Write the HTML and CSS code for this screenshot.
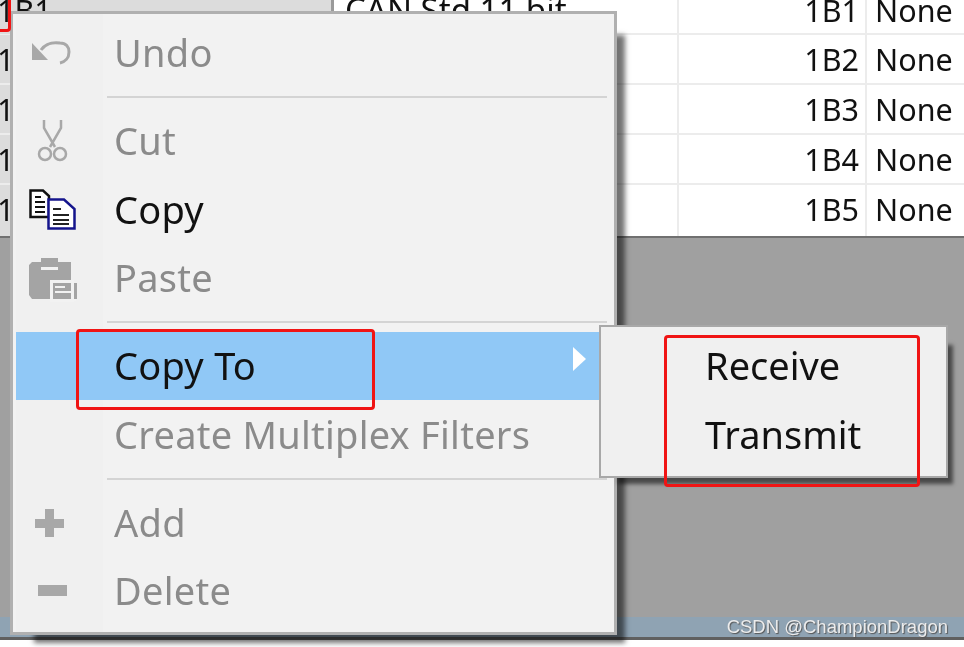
FILE: index.html
```html
<!DOCTYPE html>
<html lang="en">
<head>
  <meta charset="UTF-8">
  <title>Copy To</title>
  <link rel="stylesheet" href="styles.css">
</head>
<body>
  <div class="screen">

    <!-- Message table behind the menu -->
    <div class="table">
      <div class="row first">
        <div class="cell name">1B1</div>
        <div class="cell type">CAN Std 11 bit</div>
        <div class="cell id">1B1</div>
        <div class="cell mux">None</div>
      </div>
      <div class="row">
        <div class="cell name">1B2</div>
        <div class="cell type"></div>
        <div class="cell id">1B2</div>
        <div class="cell mux">None</div>
      </div>
      <div class="row">
        <div class="cell name">1B3</div>
        <div class="cell type"></div>
        <div class="cell id">1B3</div>
        <div class="cell mux">None</div>
      </div>
      <div class="row">
        <div class="cell name">1B4</div>
        <div class="cell type"></div>
        <div class="cell id">1B4</div>
        <div class="cell mux">None</div>
      </div>
      <div class="row last">
        <div class="cell name">1B5</div>
        <div class="cell type"></div>
        <div class="cell id">1B5</div>
        <div class="cell mux">None</div>
      </div>
    </div>
    <div class="workspace"></div>
    <div class="status"></div>
    <div class="bottom-edge"></div>

    <!-- Context menu -->
    <div class="menu">
      <div class="gutter"></div>
      <div class="item disabled">
        <svg class="icon" width="50" height="50" viewBox="0 0 50 50">
          <path d="M5 15V32H21Z" fill="#a8a8a8"/>
          <path d="M14 22C19 15 25 14 33 15C39 15 42 19 42 24C42 30 38 34 33 35" fill="none" stroke="#a8a8a8" stroke-width="3"/>
        </svg>
        <span>Undo</span>
      </div>
      <div class="sep"></div>
      <div class="item disabled">
        <svg class="icon" width="50" height="50" viewBox="0 0 50 50">
          <path d="M17 4V12L28 31M34 4V12L23 31" fill="none" stroke="#a8a8a8" stroke-width="2.5"/>
          <circle cx="18" cy="38" r="6" fill="none" stroke="#a8a8a8" stroke-width="2.5"/>
          <circle cx="33" cy="38" r="6" fill="none" stroke="#a8a8a8" stroke-width="2.5"/>
        </svg>
        <span>Cut</span>
      </div>
      <div class="item">
        <svg class="icon" width="50" height="50" viewBox="0 0 50 50">
          <path d="M3.5 5.5H16L22 11V32H3.5Z" fill="#fff" stroke="#111" stroke-width="2.5"/>
          <path d="M8 12H14M8 17H18M8 22H18M8 27H18" stroke="#111" stroke-width="2"/>
          <path d="M21.5 14.5H37L47.5 24V43.5H21.5Z" fill="#fff" stroke="#14148c" stroke-width="2.5"/>
          <path d="M26 24H34M26 30H42M26 35H42M26 39H42" stroke="#222" stroke-width="2"/>
        </svg>
        <span>Copy</span>
      </div>
      <div class="item disabled">
        <svg class="icon" width="50" height="50" viewBox="0 0 50 50">
          <path d="M5 9H14V5H31V9H44V30H50V46H5L2 42V12Z" fill="#a4a4a4"/>
          <rect x="14" y="14" width="17" height="3" fill="#f2f2f2"/>
          <path d="M23 27H47V49H23Z" fill="#f2f2f2"/>
          <path d="M26 30H44V46H26Z" fill="#a4a4a4"/>
          <path d="M28 34H38M28 39H46M24 47H49" stroke="#f2f2f2" stroke-width="2"/>
        </svg>
        <span>Paste</span>
      </div>
      <div class="sep"></div>
      <div class="item active">
        <span>Copy To</span>
        <div class="arrow"></div>
      </div>
      <div class="item disabled"><span>Create Multiplex Filters</span></div>
      <div class="sep"></div>
      <div class="item disabled">
        <svg class="icon" width="50" height="50" viewBox="0 0 50 50">
          <path d="M18 11H27V21H37V30H27V39H18V30H8V21H18Z" fill="#a8a8a8"/>
        </svg>
        <span>Add</span>
      </div>
      <div class="item disabled">
        <svg class="icon" width="50" height="50" viewBox="0 0 50 50">
          <rect x="11" y="19" width="29" height="11" fill="#a8a8a8"/>
        </svg>
        <span>Delete</span>
      </div>
    </div>

    <!-- Submenu -->
    <div class="submenu">
      <div class="sub-item">Receive</div>
      <div class="sub-item">Transmit</div>
    </div>

    <!-- Red annotation boxes -->
    <div class="mark mark-corner"></div>
    <div class="mark mark-copyto"></div>
    <div class="mark mark-sub"></div>

    <div class="watermark">CSDN @ChampionDragon</div>
  </div>
</body>
</html>
```

FILE: styles.css
```css
/* Global */
html, body {
  margin: 0;
  padding: 0;
  background: #fff;
}

.screen {
  width: 964px;
  height: 647px;
  display: flex;
  flex-direction: column;
  position: relative;
  overflow: hidden;
  font-family: "Noto Sans", sans-serif;
  font-size: 30.5px;
  color: #111;
  filter: blur(0.7px);
}

/* Table */
.row {
  display: flex;
  height: 48px;
  border-bottom: 2px solid #ececec;
  background: #fff;
}

.row.first {
  height: 33px;
  align-items: flex-end;
}

.row.last {
  height: 51px;
  border-bottom: 0;
}

.row.last .cell {
  padding-bottom: 3px;
}

.cell {
  box-sizing: border-box;
  display: flex;
  align-items: center;
  border-right: 2px solid #ececec;
  white-space: nowrap;
  line-height: 46px;
}

.row.first .cell {
  height: 48px;
  margin-bottom: -1px;
  align-self: flex-end;
}

.name {
  width: 337px;
  background: #dcdcdc;
  margin-left: -3px;
  border-right: 3px solid #9a9a9a;
}

.type {
  width: 345px;
  padding-left: 11px;
  font-size: 33px;
}

.id {
  width: 188px;
  justify-content: flex-end;
  padding-right: 6px;
}

.mux {
  flex: 1;
  padding-left: 8px;
  border-right: 0;
}

/* Areas under the table */
.workspace {
  flex: 1;
  background: #a0a0a0;
  border-top: 2px solid #707070;
}

.status {
  height: 20px;
  background: #8fa3b3;
}

.bottom-edge {
  height: 7px;
  background: #fff;
  border-top: 3px solid #606060;
}

/* Context menu */
.menu {
  position: absolute;
  left: 10px;
  top: 11px;
  width: 595px;
  height: 608px;
  padding: 5px 3px;
  font-size: 38px;
  letter-spacing: 0.25px;
  background: #f2f2f2;
  border: 3px solid #b0b0b0;
  box-shadow: 16px 16px 5px -8px rgba(0, 0, 0, 0.55);
}

.gutter {
  position: absolute;
  left: 3px;
  top: 0;
  bottom: 0;
  width: 87px;
  background: #f0f0f0;
}

.item {
  position: relative;
  box-sizing: border-box;
  display: flex;
  align-items: center;
  height: 68.3px;
  padding-left: 98px;
  padding-bottom: 2px;
  color: #111;
  line-height: 64px;
}

.item.disabled {
  color: #8b8b8b;
}

.item.active {
  background: #90c8f6;
}

.icon {
  position: absolute;
  left: 11px;
  top: 9px;
}

.sep {
  position: relative;
  height: 2px;
  margin: 9px 4px 9px 91px;
  background: #d4d4d4;
}

.arrow {
  position: absolute;
  left: 557px;
  top: 15px;
  border-left: 13px solid #fff;
  border-top: 12px solid transparent;
  border-bottom: 12px solid transparent;
}

/* Submenu */
.submenu {
  position: absolute;
  left: 599px;
  top: 325px;
  width: 345px;
  height: 144px;
  padding-top: 5px;
  font-size: 38px;
  background: #f0f0f0;
  border: 2px solid #a8a8a8;
  box-shadow: 12px 13px 4px -7px rgba(0, 0, 0, 0.55);
}

.sub-item {
  height: 69px;
  line-height: 66px;
  padding-left: 104px;
}

/* Annotation boxes */
.mark {
  position: absolute;
  box-sizing: border-box;
  border: 3px solid #f01414;
  border-radius: 4px;
}

.mark-corner {
  left: -10px;
  top: -10px;
  width: 21px;
  height: 42px;
}

.mark-copyto {
  left: 76px;
  top: 329px;
  width: 299px;
  height: 81px;
}

.mark-sub {
  left: 664px;
  top: 335px;
  width: 256px;
  height: 152px;
}

.watermark {
  position: absolute;
  right: 16px;
  top: 616px;
  font-family: "Liberation Sans", sans-serif;
  font-size: 18.5px;
  color: #ececec;
  text-shadow: 1px 1px 1px #555;
}
```
